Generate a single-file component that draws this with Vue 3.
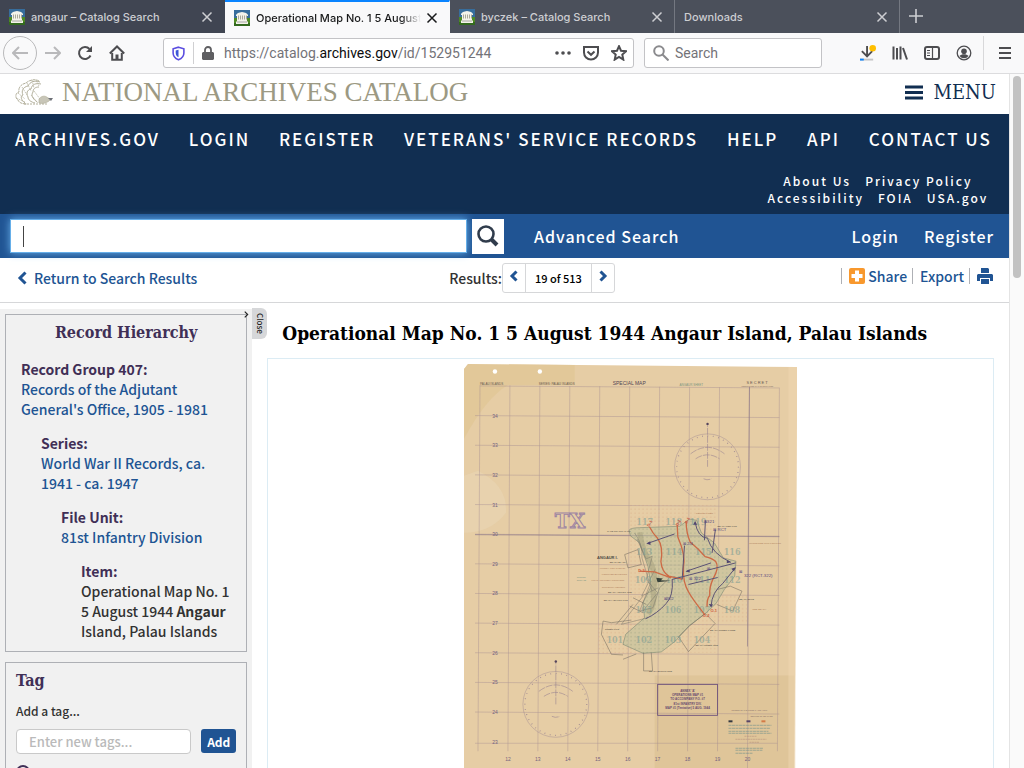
<template>
  <div class="browser">
    <!-- tab strip -->
    <div class="tabs">
      <div v-for="tab in tabs" :key="tab.title" class="tab" :class="{ active: tab.active }">
        <svg v-if="tab.icon" class="favicon" viewBox="0 0 16 16">
          <rect width="16" height="16" fill="#33691e" />
          <rect width="16" height="9" fill="#376d9c" />
          <path d="M0 8h3v5H0zM13 8h3v5h-3z" fill="#4f8a25" />
          <path d="M2 5q1-2.500 6-3 5 .5 6 3v1H2z" fill="#f4f3ea" />
          <path d="M3 5.500h10V10H3z" fill="#aaa99a" />
          <path d="M3.500 5v5M5.500 5v5M7.500 5v5M9.500 5v5M11.500 5v5" stroke="#f4f3ea" />
          <path d="M3 9.500h10v2h1V14H2v-2.500h1z" fill="#f4f3ea" />
          <path d="M3 12h10" stroke="#777" stroke-width=".6" />
        </svg>
        <span class="tab-title">{{ tab.title }}</span>
        <button class="tab-close" aria-label="Close tab">
          <svg viewBox="0 0 12 12"><path d="M1.500 1.500l9 9M10.500 1.500l-9 9" stroke="currentColor" stroke-width="1.500" /></svg>
        </button>
      </div>
      <button class="new-tab" aria-label="New tab">
        <svg viewBox="0 0 14 14"><path d="M7 0v14M0 7h14" stroke="currentColor" stroke-width="1.600" /></svg>
      </button>
    </div>

    <!-- toolbar -->
    <div class="toolbar">
      <button class="back" aria-label="Back">
        <svg viewBox="0 0 16 16"><path d="M16 8H1.500M7 2 1 8l6 6" /></svg>
      </button>
      <button class="tool forward" aria-label="Forward">
        <svg viewBox="0 0 16 16"><path d="M0 8h14.500M9 2l6 6-6 6" /></svg>
      </button>
      <button class="tool reload" aria-label="Reload">
        <svg viewBox="0 0 16 16">
          <path d="M13.500 10.500A6 6 0 1 1 12.500 4" />
          <path d="M15 1v6H9z" fill="currentColor" stroke="none" />
        </svg>
      </button>
      <button class="tool home" aria-label="Home">
        <svg viewBox="0 0 16 16">
          <path d="M.8 8.500 8 1.500l7.200 7" />
          <path d="M3.200 8v6.800h9.600V8" />
          <path d="M6.500 9.500h3V15h-3z" fill="currentColor" stroke="none" />
        </svg>
      </button>
      <div class="url-bar">
        <svg class="shield" viewBox="0 0 14 16">
          <path d="M7 1.200 12.800 3v4.500c0 3.500-2.500 6-5.800 7.300C3.700 13.500 1.200 11 1.200 7.500V3z" fill="none" stroke="#5b4ee0" stroke-width="1.700" />
          <path d="M7 4v8C5 11 4 9.500 4 7.500V4.800z" fill="#3d56d8" />
        </svg>
        <span class="url-divider"></span>
        <svg class="lock" viewBox="0 0 12 14">
          <path d="M3 7V4a3 3 0 0 1 6 0v3" fill="none" stroke="#5f5f62" stroke-width="1.800" />
          <path d="M1 6h10l1 1v6l-1 1H1l-1-1V7z" class="lock-body" />
        </svg>
        <span class="url">https://catalog.<b>archives.gov</b>/id/152951244</span>
        <svg class="url-icon dots" viewBox="0 0 16 16">
          <circle cx="2" cy="8" r="1.800" />
          <circle cx="8" cy="8" r="1.800" />
          <circle cx="14" cy="8" r="1.800" />
        </svg>
        <svg class="url-icon" viewBox="0 0 16 16">
          <path d="M1 2h14v5.500a7 7 0 0 1-14 0z" />
          <path d="m4.500 6.500 3.500 3.300 3.500-3.300" stroke-width="2" />
        </svg>
        <svg class="url-icon" viewBox="0 0 16 16">
          <path d="m8 1.200 2 4.500 5 .5-3.700 3.400 1 5L8 12l-4.300 2.600 1-5L1 6.200l5-.5z" />
        </svg>
      </div>
      <label class="quick-search">
        <svg viewBox="0 0 16 16"><circle cx="6" cy="6" r="4.800" /><path d="m9.500 9.500 6 6" /></svg>
        <input type="text" placeholder="Search" aria-label="Search" />
      </label>
      <div class="tools">
        <button class="tool" aria-label="Downloads">
          <svg viewBox="0 0 17 17">
            <path d="M7.500 1v10.500M2 6.500l5.500 5.500L13 6.500" />
            <path d="M0 15.500h14" stroke="#c5c5c5" />
            <path d="M0 15.500h4" stroke="#0a84ff" />
            <circle cx="13.500" cy="3.500" r="3.500" fill="#ffbf00" stroke="none" />
          </svg>
        </button>
        <button class="tool" aria-label="Library">
          <svg viewBox="0 0 16 16"><path d="M1.500 1.500v13M5 3v11.500M8.500 1.500v13M11 3l4 11.500" /></svg>
        </button>
        <button class="tool" aria-label="Sidebars">
          <svg viewBox="0 0 16 16">
            <rect x="1" y="2" width="14" height="12" rx="2" />
            <path d="M8.500 2v12M3 5.500h3M3 8h3M3 10.500h3" stroke-width="1.200" />
          </svg>
        </button>
        <button class="tool" aria-label="Account">
          <svg viewBox="0 0 16 16">
            <circle cx="8" cy="8" r="6.800" stroke-width="1.300" />
            <circle cx="8" cy="6.200" r="2.800" fill="currentColor" stroke="none" />
            <path d="M3.500 11c2-2.500 7-2.500 9 0a5.500 5.500 0 0 1-9 0z" fill="currentColor" stroke="none" />
          </svg>
        </button>
        <span class="tool-divider"></span>
        <button class="tool" aria-label="Open menu">
          <svg viewBox="0 0 16 16"><path d="M2 3h12M2 8h12M2 13h12" /></svg>
        </button>
      </div>
    </div>

    <div class="viewport">
      <div class="page">
        <header class="masthead">
          <a href="#" class="brand">
            <svg class="eagle" viewBox="0 0 40 26" fill="none" stroke="#b3b09c">
              <path d="M25 2C20-1 14 2 12 4 7 5 4 9 5 13c-4 1-4 6-1 8 1 3 5 4 9 4" stroke-dasharray="3 .6" />
              <path d="M26 3c-6-2-10 0-12 4-5 1-7 5-5 9-3 1-2 5 2 8M27 5c-5-1-9 0-10 5-4 1-5 4-3 8 0 3 3 5 7 6M25 8c-4 0-6 2-6 5-2 3-1 6 4 10" />
              <path d="M22 1l3 6M18 1l2 8M13 4l4 8M8 8l5 8M4 14l7 6M2 19l9 4M20 12l6 8M17 16l7 8" stroke-width=".7" stroke-dasharray="2 .8" />
              <path d="M25 20c2-3 6-4 9-1l3 1-2 2c-3 2-6 3-10 2z" fill="#c8c6b8" stroke-width=".7" />
              <path d="M34 19h5l-2 3z" fill="#6d7077" stroke="none" />
              <path d="M10 25h23" stroke-dasharray="2 1" />
            </svg>
            <span>NATIONAL ARCHIVES CATALOG</span>
          </a>
          <button class="menu-button">
            <svg viewBox="0 0 18 15"><path d="M0 2h18M0 7.500h18M0 13h18" stroke="currentColor" stroke-width="3" /></svg>
            MENU
          </button>
        </header>

        <nav class="main-nav">
          <div class="nav-links">
            <a v-for="link in navLinks" :key="link" href="#">{{ link }}</a>
          </div>
          <div class="sub-links">
            <div v-for="(row, index) in subLinks" :key="index">
              <a v-for="link in row" :key="link" href="#">{{ link }}</a>
            </div>
          </div>
        </nav>

        <form class="search-bar" @submit.prevent>
          <input v-model="query" type="text" aria-label="Search the catalog" />
          <button class="search-button" aria-label="Search">
            <svg viewBox="0 0 22 22" fill="none" stroke="#303c4c"><circle cx="9" cy="9" r="7.500" stroke-width="2.600" /><path d="m14.500 14.500 5.500 5.500" stroke-width="4" /></svg>
          </button>
          <a href="#" class="advanced">Advanced Search</a>
          <a href="#">Login</a>
          <a href="#">Register</a>
        </form>

        <div class="results-bar">
          <a href="#" class="return">
            <svg viewBox="0 0 10 14"><path d="M8.500 1.500 3 7l5.500 5.500" /></svg>
            Return to Search Results
          </a>
          <div class="pager">
            <span>Results:</span>
            <div class="pager-group">
              <button aria-label="Previous result" @click="current--">
                <svg viewBox="0 0 10 14"><path d="M7.500 2.500 3 7l4.500 4.500" /></svg>
              </button>
              <span>{{ current }} of 513</span>
              <button aria-label="Next result" @click="current++">
                <svg viewBox="0 0 10 14"><path d="M2.500 2.500 7 7l-4.500 4.500" /></svg>
              </button>
            </div>
          </div>
          <div class="actions">
            <a href="#">
              <svg viewBox="0 0 16 16"><rect width="16" height="16" rx="2" fill="#f8982d" /><path d="M8 2.500v11M2.500 8h11" stroke="#fff" stroke-width="4" /></svg>
              Share
            </a>
            <a href="#">Export</a>
            <a href="#" aria-label="Print">
              <svg viewBox="0 0 16 16" fill="#205493">
                <path d="M4 0h7l1 1v4H4z" />
                <path d="M1 6h14l1 1v6h-3v-3H3v3H0V7z" />
                <path d="M4 11h8v5H4z" />
              </svg>
            </a>
          </div>
        </div>

        <div class="content">
          <aside class="sidebar">
            <section class="panel hierarchy">
              <svg class="collapse" viewBox="0 0 4 6"><path d="m.5.5 2.500 2.500-2.500 2.500" fill="none" stroke="#222" /></svg>
              <h2>Record Hierarchy</h2>
              <dl>
                <div v-for="(level, index) in levels" :key="level.label" :class="'level-' + index">
                  <dt>{{ level.label }}</dt>
                  <dd><a href="#">{{ level.text }}</a></dd>
                </div>
                <div class="level-3">
                  <dt>Item:</dt>
                  <dd>Operational Map No. 1 5 August 1944 <b>Angaur</b> Island, Palau Islands</dd>
                </div>
              </dl>
            </section>
            <section class="panel tag">
              <h2>Tag</h2>
              <label for="new-tag">Add a tag...</label>
              <form class="tag-form" @submit.prevent>
                <input id="new-tag" v-model="newTag" type="text" placeholder="Enter new tags..." />
                <button>Add</button>
              </form>
              <button class="tag-help" aria-label="About tagging">
                <svg viewBox="0 0 14 14" fill="none" stroke="#402f56" stroke-width="2"><circle cx="7" cy="7" r="6" /><path d="M7 6v4M7 3.500v1.500" /></svg>
              </button>
            </section>
            <button class="close-panel">Close</button>
          </aside>

          <main>
            <h1>Operational Map No. 1 5 August 1944 Angaur Island, Palau Islands</h1>
            <figure>
              <svg class="map" viewBox="0 0 334 410">
                <defs>
                  <pattern id="dots" width="12" height="12" patternUnits="userSpaceOnUse">
                    <circle cx="4" cy="4" r="1.500" fill="#cf936f" opacity=".65" />
                  </pattern>
                  <pattern id="green-dots" width="12" height="12" patternUnits="userSpaceOnUse">
                    <circle cx="4" cy="4" r="1.500" fill="#7f9d80" opacity=".7" />
                  </pattern>
                </defs>
                <path d="M4 0 115 1l219 2-3 407H0V5z" fill="#e6cda5" />
                <path d="M4 0 111 1v20H44Q22 34 0 75V5z" fill="#dfc491" opacity=".6" />
                <path d="M14 107q30 15 28 42-15 20-42 20v-57z" fill="#e9d8b7" opacity=".5" />
                <path d="M191 312h140v98H191z" fill="#d8bd8e" opacity=".5" />
                <path d="M325 3h9l-2 407h-7z" fill="#efd8b2" opacity=".5" />
                <circle cx="31" cy="7.500" r="2.200" fill="#fff" />
                <circle cx="76" cy="7.500" r="2.200" fill="#fff" />

                <g stroke="#89718a" stroke-width=".5" opacity=".6">
                  <path v-for="n in 11" :key="'v' + n" :d="`M${30 * n - 14} ${21 + n / 4}L${30 * n - 16} ${n === 10 ? 410 : 388}`" />
                  <path v-for="n in 12" :key="'h' + n" :d="`M${n === 1 ? 16 : 11} ${22 + 29.700 * (n - 1)}L316 ${24 + 29.700 * (n - 1)}`" />
                  <path d="M11 380h303" />
                </g>
                <path d="M286 23l-2 260M11 171l305 2" stroke="#73617f" stroke-width=".5" />
                <g class="grid-label">
                  <text v-for="n in 12" :key="'r' + n" x="31" :y="24 + 29.700 * n">{{ 35 - n }}</text>
                  <text v-for="n in 9" :key="'c' + n" :x="14 + 30 * n" y="398">{{ 11 + n }}</text>
                </g>

                <g v-for="c in compasses" :key="c.x" :transform="`translate(${c.x} ${c.y})`" fill="none" stroke="#9b8591">
                  <circle r="33" stroke-width=".6" opacity=".7" />
                  <circle r="31" stroke-width="1.300" stroke-dasharray=".7 4.700" />
                  <path d="M0 0v-43M-17-13q17-13 34 0M-12-8q12-8 24 0M-4 12q4 2 8 0" stroke-width=".6" stroke-dasharray="7 1" />
                  <circle cy="-43" r="1.200" fill="#54445c" stroke="none" />
                </g>

                <text x="149" y="21" class="map-title">SPECIAL MAP</text>
                <text x="16" y="21" class="tiny">PALAU ISLANDS</text>
                <text x="75" y="21" class="tiny">SERIES: PALAU ISLANDS</text>
                <text x="216" y="22" class="tiny green">ANGAUR SHEET</text>
                <text x="283" y="20" class="tiny spaced">SECRET</text>
                <text x="278" y="23" class="micro">RESTRICTED MAP INFORMATION</text>
                <text x="91" y="164" class="tx">TX</text>

                <!-- island with its operation lines, drawn at three times the map scale -->
                <g transform="translate(126 136) scale(.333)">
                  <path d="M118 15h265v445H118zM383 285h90v85h-90z" fill="url(#dots)" />
                  <path d="M25 370h100v95H25z" fill="url(#dots)" />
                  <path :d="island" fill="#b9c09a" opacity=".5" />
                  <path :d="island" fill="url(#green-dots)" stroke="#697c6c" stroke-width="1.500" />
                  <path d="M150 98q10 60 30 85 25 50 10 90 10 40-15 70" fill="none" stroke="#8b8868" stroke-width="16" opacity=".3" />
                  <path d="M135 100q25 35 22 75l30 100M142 118l28 60 18-8-18 70 34 40-44 55M185 245l-35 90 40-10 20-60 30-30M196 210l-40 80 50-25M160 290l-65 85 80-20" fill="none" stroke="#77766c" stroke-width="1.500" />
                  <path d="m105 165 40-15 10 45-40 10zM130 295l40 20M120 320l40 20M80 375l50-60M162 460v55h27l-4-55M300 380l47-38 30 30-80 85-30-45zM383 270l40-10 35 15-28 60-48-20M125 362l-60 8-25-5-5 40 30 60 35 2M100 480l40-16" fill="none" stroke="#69645b" stroke-width="1.500" />
                  <g class="sector">
                    <text v-for="s in sectors" :key="s.name" :x="s.x" :y="s.y">{{ s.name }}</text>
                  </g>
                  <path d="M180 82q10 20 24 34 18 25 10 70 3 32 24 44l40 9M263 75l2 37q24 55 17 90-3 45 15 75 10 20 50 70M290 65q0 35 12 62 25 20 45 44 24 6 32 15 12 16-8 52-12 25-10 50-9 10-8 34M150 215l45 2 50 18" fill="none" stroke="#cd6a45" stroke-width="4" />
                  <path d="m255 103-80 28M365 190l-74 25M285 138l-7 102M247 240l192-50M385 234l-88 21M317 68q8 45 37 48 15 48 70 72M438 205l-38 47q-32 26-35 67M248 240q4 50-18 72-26 30-62 46M348 62l-3 60M378 90l-10 70" fill="none" stroke="#5b5274" stroke-width="3" />
                  <g fill="#50466f">
                    <path d="m170 132 12-7 1 11zM288 216l12-7 1 10zM425 188l-12-7-1 10zM439 203l-13 5 8 8zM365 324l-7-10 13 1zM317 64l-6 11h12z" />
                    <path d="M200 235l20 2-6 5 30 2-40 4z" fill="#37423b" />
                  </g>
                  <g class="red-text">
                    <text x="146" y="218">D-3</text><text x="340" y="354">O-2</text><text x="363" y="338">O-1</text>
                    <text x="170" y="78" transform="rotate(-60 178 72)">D-1</text><text x="256" y="76" transform="rotate(-60 264 70)">D-2</text><text x="284" y="71" transform="rotate(-60 290 65)">D-3</text>
                  </g>
                  <g class="purple-text">
                    <text x="344" y="70">⊠321</text><text x="372" y="94">⊠ RCT</text><text x="280" y="135">⊠ 2/4</text><text x="222" y="302">⊠322</text><text x="300" y="242">⊠ 322</text><text x="448" y="220">⊠</text><text x="464" y="232">322 (RCT-322)</text><text x="354" y="212">⊠</text>
                  </g>
                  <g class="place">
                    <text x="22" y="178" class="place-main">ANGAUR I.</text>
                    <text x="60" y="189">BEACH BLACK</text><text x="55" y="281">BEACH YELLOW ONE</text><text x="42" y="306">BEACH YELLOW TWO</text>
                    <text x="45" y="391">GREEN TWO</text><text x="362" y="395">BEACH GREEN THREE</text><text x="318" y="440">BEACH GREEN ONE</text>
                    <text x="178" y="519">BEACH BROWN ONE</text><text x="450" y="301">BEACH BLUE</text><text x="384" y="82">BEACH RED TWO</text><text x="52" y="96">CAPE NGARMASARU</text>
                  </g>
                  <g class="place brown">
                    <text x="28" y="207">APPROX. LOCATION OF</text><text x="36" y="227">FORTIFIED BUILDINGS</text><text x="5" y="246">LIGHT ARTILLERY POSITIONS</text><text x="36" y="265">GUN EMPLACEMENT</text>
                    <text x="480" y="132">SUSPECTED GUN POSITION</text><text x="490" y="332">RED BEACH</text><text x="320" y="43">SECTOR LINES</text>
                  </g>
                </g>
                <g class="micro green"><text x="113" y="214">GROUND</text><text x="113" y="217">SURFACE</text></g>

                <rect x="194" y="321" width="60" height="31" fill="none" stroke="#6e537b" stroke-width=".9" />
                <g class="annex">
                  <text x="224" y="329">ANNEX 'A'</text><text x="224" y="333">OPERATIONS MAP #1</text><text x="224" y="337">TO ACCOMPANY F.O. #7</text><text x="224" y="342">81st INFANTRY DIV.</text><text x="224" y="346">MAP #1 (Tentative) 5 AUG. 1944</text>
                </g>

                <!-- legend -->
                <text x="268" y="348" class="micro">LEGEND OF THE COMBAT AREA UNIT</text>
                <text x="287" y="354" class="micro">SECTION OF BEACHES</text>
                <path d="M265 357h4v2h-4z" fill="#353940" /><path d="M283 357h4v2h-4z" fill="#584668" /><path d="M298 357h4v2h-4z" fill="#d37b47" />
                <path d="M265 362h43M265 365h42M265 368h40M265 370h43M272 385h28M272 387h27M272 390h17" stroke="#71918b" stroke-width=".6" stroke-dasharray="3 .5" />
                <path d="M281 373h12M272 376h31M286 379h10" stroke="#af8878" stroke-width=".5" stroke-dasharray="2 .5" />
              </svg>
            </figure>
          </main>
        </div>
      </div>
      <div class="scrollbar"><div class="thumb"></div></div>
    </div>
  </div>
</template>

<script setup>
import { ref } from 'vue';

const query = ref('');
const newTag = ref('');
const current = ref(19);

const tabs = [
  { title: 'angaur – Catalog Search', icon: true },
  { title: 'Operational Map No. 1 5 August 1944', icon: true, active: true },
  { title: 'byczek – Catalog Search', icon: true },
  { title: 'Downloads' },
];

const navLinks = [
  'ARCHIVES.GOV',
  'LOGIN',
  'REGISTER',
  "VETERANS' SERVICE RECORDS",
  'HELP',
  'API',
  'CONTACT US',
];

const subLinks = [
  ['About Us', 'Privacy Policy'],
  ['Accessibility', 'FOIA', 'USA.gov'],
];

const levels = [
  { label: 'Record Group 407:', text: "Records of the Adjutant General's Office, 1905 - 1981" },
  { label: 'Series:', text: 'World War II Records, ca. 1941 - ca. 1947' },
  { label: 'File Unit:', text: '81st Infantry Division' },
];

// coastline
const island =
  'M118 92Q124 84 150 84L270 80 300 58 322 62 336 100 375 130 402 175 440 185 436 230 405 270 380 312 345 345 300 378 258 425 215 458 160 462 100 435 108 405 165 355 160 310 185 260 175 200 150 130 122 108Z';

// compass roses on the map
const compasses = [
  { x: 244, y: 103 },
  { x: 92, y: 341 },
];

// numbered target squares
const sectors = [
  { name: '117', x: 140, y: 76 },
  { name: '118', x: 227, y: 76 },
  { name: '119', x: 300, y: 76 },
  { name: '113', x: 138, y: 165 },
  { name: '114', x: 228, y: 165 },
  { name: '115', x: 316, y: 165 },
  { name: '116', x: 403, y: 165 },
  { name: '109', x: 135, y: 252 },
  { name: '110', x: 228, y: 252 },
  { name: '111', x: 312, y: 252 },
  { name: '112', x: 403, y: 252 },
  { name: '105', x: 137, y: 340 },
  { name: '106', x: 225, y: 340 },
  { name: '107', x: 312, y: 340 },
  { name: '108', x: 402, y: 340 },
  { name: '101', x: 50, y: 430 },
  { name: '102', x: 137, y: 430 },
  { name: '103', x: 225, y: 430 },
  { name: '104', x: 312, y: 430 },
];
</script>

<style>
body {
  margin: 0;
  overflow: hidden;
}
</style>

<style scoped>
* {
  box-sizing: border-box;
}

button {
  padding: 0;
  border: none;
  background: none;
  color: inherit;
  font: inherit;
  cursor: pointer;
}

a {
  color: #205493;
  text-decoration: none;
}

.browser {
  display: flex;
  flex-direction: column;
  height: 100vh;
  background: #fff;
  font-family: Inter, "Liberation Sans", sans-serif;
}

/* tabs */
.tabs {
  display: flex;
  flex: 0 0 33px;
  background: #4b505b;
  color: #cdced2;
}

.tab {
  display: flex;
  align-items: center;
  flex: 0 1 225px;
  min-width: 0;
  padding: 0 11px 0 9px;
  border-right: 1px solid #747881;
  font-size: 11px;
  font-weight: 500;
}

.tab:first-child {
  border-right-color: #404552;
  background: #404552;
}

.tab.active {
  border-top: 2px solid #0a84ff;
  border-right-color: #f9f9fa;
  background: #f9f9fa;
  color: #18191a;
}

.favicon {
  flex: 0 0 16px;
  height: 16px;
  margin-right: 6px;
}

.tab-title {
  flex: 1;
  overflow: hidden;
  white-space: nowrap;
}

.active .tab-title {
  mask-image: linear-gradient(to right, #000 88%, transparent);
}

.tab-close {
  width: 12px;
  height: 12px;
  margin-left: 5px;
}

.tab-close svg {
  display: block;
}

.new-tab {
  width: 32px;
}

.new-tab svg {
  width: 14px;
}

/* toolbar */
.toolbar {
  display: flex;
  align-items: center;
  flex: 0 0 41px;
  padding: 0 11px 0 3px;
  border-bottom: 1px solid #dcdcde;
  background: #f9f9fa;
  color: #4d4d50;
}

.toolbar svg {
  fill: none;
  stroke: currentColor;
  stroke-width: 2;
}

.back {
  display: grid;
  place-items: center;
  flex: 0 0 34px;
  height: 34px;
  border: 1px solid #b9b9bb;
  border-radius: 50%;
  color: #b9b9bb;
}

.back svg,
.tool svg {
  display: block;
  width: 16px;
  height: 16px;
}

.forward {
  margin-left: 8px;
  color: #b9b9bb;
}

.reload,
.home {
  margin-left: 16px;
}

.url-bar,
.quick-search {
  display: flex;
  align-items: center;
  height: 30px;
  border: 1px solid #c3c3c6;
  border-radius: 3px;
  background: #fff;
}

.url-bar {
  flex: 1;
  margin-left: 38px;
  padding: 0 6px 0 8px;
}

.url-bar .shield {
  width: 13px;
  height: 15px;
  stroke: none;
}

.url-divider {
  width: 1px;
  height: 22px;
  margin: 0 8px;
  background: #d0d0d2;
}

.url-bar .lock {
  width: 12px;
  height: 14px;
}

.lock-body {
  fill: #5f5f62;
  stroke: none;
}

.url {
  flex: 1;
  margin-left: 10px;
  color: #737378;
  font: 14px Roboto, "Liberation Sans", sans-serif;
}

.url b {
  color: #0c0c0d;
  font-weight: 400;
}

.url-icon {
  width: 16px;
  height: 16px;
  margin-left: 12px;
}

.toolbar .dots {
  fill: currentColor;
  stroke: none;
}

.quick-search {
  flex: 0 0 178px;
  margin-left: 10px;
  padding-left: 8px;
}

.quick-search svg {
  flex: 0 0 16px;
  color: #8a8a8d;
}

.quick-search input {
  width: 100%;
  padding: 0 6px;
  border: none;
  background: none;
  font: 14px Roboto, "Liberation Sans", sans-serif;
}

.quick-search input::placeholder {
  color: #737378;
}

.tools {
  display: flex;
  align-items: center;
  gap: 16px;
  margin-left: 38px;
}

.tool-divider {
  width: 1px;
  height: 34px;
  margin: 0 -3px 0 -5px;
  background: #d8d8da;
}

/* page frame */
.viewport {
  display: flex;
  flex: 1;
  min-height: 0;
}

.page {
  flex: 1;
  min-width: 0;
  overflow: hidden;
  color: #323232;
  font-family: "Noto Sans CJK SC", "Noto Sans", sans-serif;
  font-size: 14px;
  font-weight: 500;
}

.scrollbar {
  flex: 0 0 15px;
  padding: 2px 3px;
  border-left: 1px solid #e4e4e4;
  background: #fafafa;
}

.thumb {
  width: 8px;
  height: 202px;
  border-radius: 4px;
  background: #c2c2c2;
}

.masthead {
  display: flex;
  align-items: center;
  justify-content: space-between;
  height: 40px;
  padding: 0 13px 4px 14px;
}

.brand {
  display: flex;
  align-items: center;
  gap: 8px;
  color: #9c9983;
  font: 27px/30px "Liberation Serif", serif;
}

.eagle {
  width: 40px;
  height: 26px;
}

.menu-button {
  display: flex;
  align-items: center;
  gap: 11px;
  color: #112e51;
  font: 20px/30px "DejaVu Serif Condensed", "DejaVu Serif", serif;
}

.menu-button svg {
  width: 18px;
  height: 15px;
}

.main-nav {
  height: 100px;
  padding: 12px 17px 0 15px;
  background: #112e51;
}

.main-nav a,
.search-bar a {
  color: #fff;
}

.nav-links {
  display: flex;
  justify-content: space-between;
  font-size: 17px;
  line-height: 25px;
  letter-spacing: 2px;
  white-space: nowrap;
}

.sub-links {
  width: 228px;
  margin: 21px 0 0 auto;
  font-size: 12px;
  line-height: 17px;
  letter-spacing: 2px;
}

.sub-links div {
  display: flex;
  justify-content: center;
  gap: 14px;
}

.search-bar {
  display: flex;
  align-items: center;
  gap: 25px;
  height: 44px;
  padding: 0 15px 0 10px;
  background: #205493;
  font-size: 16px;
  letter-spacing: 1px;
}

.search-bar input {
  flex: 0 1 457px;
  min-width: 0;
  height: 34px;
  margin-right: -20px;
  border: 1px solid #66afe9;
  outline: none;
  background: linear-gradient(#444, #444) 12px center / 1px 21px no-repeat #fff;
  box-shadow: 0 0 8px #66afe9;
}

.search-button {
  display: grid;
  place-items: center;
  width: 32px;
  height: 35px;
  margin-right: 5px;
  background: #fff;
}

.search-button svg {
  width: 22px;
}

.search-bar .advanced {
  margin-right: auto;
}

.results-bar {
  display: grid;
  grid-template-columns: 8fr auto 7fr;
  align-items: center;
  height: 45px;
  padding: 0 16px 4px 17px;
  border-bottom: 1px solid #d6d7d9;
}

.return {
  display: flex;
  align-items: center;
  gap: 7px;
}

.return svg,
.pager svg {
  width: 10px;
  height: 14px;
  fill: none;
  stroke: #205493;
  stroke-width: 3;
}

.pager {
  display: flex;
  align-items: center;
}

.pager-group {
  display: flex;
  height: 30px;
  border: 1px solid #d6d7d9;
  border-radius: 3px;
  color: #000;
  font-size: 11px;
  line-height: 28px;
}

.pager-group button {
  width: 22px;
}

.pager-group span {
  padding: 0 9px;
  border: solid #d6d7d9;
  border-width: 0 1px;
}

.actions {
  display: flex;
  justify-content: flex-end;
  gap: 5px;
  padding-bottom: 4px;
}

.actions a {
  display: flex;
  align-items: center;
  gap: 3px;
  height: 16px;
  padding-left: 7px;
  border-left: 1px solid #aeb0b5;
}

.actions svg {
  flex: 0 0 16px;
  height: 16px;
}

/* record */
.content {
  display: flex;
  align-items: flex-start;
  padding-top: 6px;
}

.sidebar {
  position: relative;
  flex: 0 0 25%;
  padding: 5px;
  background: #f1f1f1;
}

.panel {
  position: relative;
  margin-bottom: 10px;
  border: 1px solid #aeb0b5;
}

.hierarchy {
  padding: 6px 15px 10px;
}

.panel h2 {
  margin: 0;
  color: #402f56;
  font: bold 16px/24px "DejaVu Serif Condensed", "DejaVu Serif", serif;
}

.hierarchy h2 {
  text-align: center;
}

dl,
dd {
  margin: 0;
}

dl div {
  margin-top: 14px;
  line-height: 20px;
}

dt,
dd b {
  font-weight: 700;
}

dt {
  color: #402f56;
}

.level-1 {
  padding-left: 20px;
}

.level-2 {
  padding-left: 40px;
}

.level-3 {
  padding-left: 60px;
  margin-right: -5px;
}

.collapse {
  position: absolute;
  top: -4px;
  right: -3px;
  width: 5px;
  height: 7px;
}

.tag {
  padding: 6px 10px;
}

.tag label {
  display: block;
  margin-top: 9px;
  font-size: 12px;
  line-height: 18px;
}

.tag-form {
  display: flex;
  gap: 10px;
  margin: 9px 0 11px;
}

.tag-form input {
  flex: 1;
  min-width: 0;
  height: 25px;
  padding: 0 12px;
  border: 1px solid #c9c9c9;
  border-radius: 4px;
  background: #fff;
  font: 500 13px "Noto Sans CJK SC", sans-serif;
}

.tag-form input::placeholder {
  color: #bababa;
}

.tag-form button {
  width: 35px;
  height: 24px;
  border-radius: 3px;
  background: #205493;
  color: #fff;
  font-size: 12px;
  font-weight: 700;
}

.tag-help {
  display: block;
  width: 14px;
  height: 14px;
}

.tag-help svg {
  display: block;
}

.close-panel {
  position: absolute;
  top: -1px;
  left: 100%;
  width: 15px;
  height: 31px;
  border-radius: 0 6px 6px 0;
  background: #d6d7d9;
  color: #222;
  font-size: 8px;
  line-height: 10px;
  writing-mode: vertical-rl;
}

main {
  flex: 1;
  min-width: 0;
  padding: 0 15px;
}

h1 {
  margin: 9px 0 10px;
  padding-left: 15px;
  color: #000;
  font: bold 19px/30px "DejaVu Serif Condensed", "DejaVu Serif", serif;
  white-space: nowrap;
}

figure {
  display: flex;
  justify-content: center;
  margin: 0;
  padding: 5px 0;
  border: 1px solid #dcecf4;
}

.map {
  flex: 0 0 46%;
  display: block;
  font-family: "Liberation Sans", sans-serif;
}

.grid-label {
  fill: #73617f;
  font-size: 5px;
  text-anchor: middle;
}

.map-title {
  fill: #514654;
  font-size: 5px;
}

.tiny {
  fill: #665951;
  font-size: 3px;
}

.micro {
  fill: #8a716a;
  font-size: 2px;
}

.tiny.spaced {
  font-size: 4px;
  letter-spacing: 1px;
}

.green {
  fill: #7d9681;
}

.tx {
  fill: #e6cda5;
  stroke: #9d84a2;
  stroke-width: 1;
  font: bold 20px "DejaVu Serif", serif;
}

.sector {
  fill: #7f9d94;
  fill-opacity: .6;
  font: bold 27px "DejaVu Serif Condensed", "DejaVu Serif", serif;
}

.red-text {
  fill: #cc5741;
  font-size: 12px;
  font-weight: 700;
}

.purple-text {
  fill: #5b4b80;
  font-size: 13px;
}

.place {
  fill: #514c46;
  font-size: 7px;
}

.place .place-main {
  font-size: 12px;
  font-weight: 700;
}

.place.brown {
  fill: #b07f5c;
}

.annex {
  fill: #67496e;
  font-size: 3px;
  font-weight: 700;
  text-anchor: middle;
}
</style>
